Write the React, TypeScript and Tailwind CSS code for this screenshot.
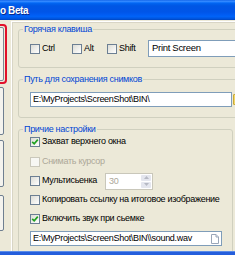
import React from 'react';

function Check({ checked = false, disabled = false }: { checked?: boolean; disabled?: boolean }) {
  return (
    <span
      className={
        disabled
          ? 'w-[10px] h-[10px] shrink-0 border border-[#CAC8BB] bg-[#F7F7F3]'
          : 'w-[10px] h-[10px] shrink-0 border border-[#6C7F93] bg-[linear-gradient(135deg,#DCDCD5,#FFFFFF)] flex items-center justify-center'
      }
    >
      {checked && (
        <svg width="8" height="8" viewBox="0 0 8 8">
          <path d="M1.2 3.8 L3.2 5.8 L6.8 1.6" fill="none" stroke="#21A121" strokeWidth="1.7" />
        </svg>
      )}
    </span>
  );
}

function Group({ title, className, children }: { title: string; className: string; children: React.ReactNode }) {
  return (
    <fieldset className={`border border-[#D0D0BF] rounded-[3px] pl-[11px] ${className}`}>
      <legend className="ml-[-7px] px-[1px] leading-[11px] text-[#0046D5]">{title}</legend>
      {children}
    </fieldset>
  );
}

export default function App() {
  return (
    <div className="w-[235px] h-[255px] overflow-hidden flex flex-col bg-[#ECE9D8] text-[9px] tracking-[-0.3px] text-black font-['Liberation_Sans',Arial,sans-serif]">
      {/* title bar */}
      <div className="h-[20px] shrink-0 flex items-center bg-[linear-gradient(to_bottom,#0A5FE8_0%,#3D8FFF_6%,#1A7BFF_10%,#0062EE_18%,#0056E4_30%,#0055E8_60%,#005BF2_72%,#0063F8_82%,#0057E2_92%,#0046C0_100%)]">
        <span className="ml-0 text-white font-bold text-[10px] tracking-[-0.4px] [text-shadow:1px_1px_0_#0A2A8A]">o Beta</span>
      </div>

      <div className="flex-1 min-h-0 flex overflow-hidden">
        {/* left buttons */}
        <div className="w-[11px] shrink-0 flex flex-col">
          <div className="mt-[4px] ml-[-7px] w-[14px] h-[60px] rounded-[4px] border-2 border-[#E2102A] p-px">
            <div className="h-full rounded-[2px] border border-[#7D8894] bg-[#F4F3EE]" />
          </div>
          <div className="mt-[3px] ml-[-7px] w-[11px] h-[48px] rounded-[2px] border border-[#6F7F90] bg-[#F4F3EE]" />
          <div className="mt-[5px] ml-[-7px] w-[11px] h-[47px] rounded-[2px] border border-[#6F7F90] bg-[#F4F3EE]" />
          <div className="mt-[8px] ml-[-7px] w-[11px] h-[36px] rounded-[2px] border border-[#6F7F90] bg-[#F4F3EE]" />
        </div>

        {/* panel */}
        <div className="w-[240px] shrink-0 mt-px border-l border-t border-[#FFFFFF] shadow-[inset_1px_1px_0_#D8D5C6] pl-[6px]">
          <Group title="Горячая клавиша" className="mt-[2px] pt-[5px] pb-[10px]">
            <div className="flex items-center h-[17px]">
              <label className="w-[42px] flex items-center gap-[2px]"><Check />Ctrl</label>
              <label className="w-[35px] flex items-center gap-[2px]"><Check />Alt</label>
              <label className="w-[41px] flex items-center gap-[2px]"><Check />Shift</label>
              <div className="flex-1 h-[17px] border border-[#7F9DB9] bg-white flex items-center pl-[3px] text-[9.5px]">Print Screen</div>
            </div>
          </Group>

          <Group title="Путь для сохранения снимков" className="mt-[6px] pt-[7px] pb-[10px]">
            <div className="flex items-center h-[15px]">
              <div className="w-[202px] h-[15px] border border-[#7F9DB9] bg-white flex items-center pl-[2px]">E:\MyProjects\ScreenShot\BIN\</div>
              <div className="ml-px w-[8px] h-[11px] bg-[#F2D86A] border border-[#C9A93A] rounded-[1px]" />
            </div>
          </Group>

          <Group title="Причие настройки" className="mt-[6px] w-[215px] pb-[20px]">
            <label className="h-[14px] flex items-center gap-[2px]"><Check checked />Захват верхнего окна</label>
            <label className="mt-[6px] h-[14px] flex items-center gap-[2px] text-[#ACA899]"><Check disabled />Снимать курсор</label>
            <div className="mt-[5px] h-[14px] flex items-center">
              <label className="w-[75px] flex items-center gap-[2px]"><Check />Мультисьенка</label>
              <div className="w-[48px] h-[17px] shrink-0 border border-[#C9C7BA] bg-white flex">
                <span className="flex-1 pl-[3px] leading-[15px] text-[#ACA899]">30</span>
                <div className="w-[12px] flex flex-col gap-px p-px">
                  <div className="flex-1 rounded-[1px] bg-[#E4E6EE] flex items-center justify-center">
                    <svg width="5" height="3" viewBox="0 0 5 3"><path d="M0 3 L2.5 0 L5 3Z" fill="#B6B9C4" /></svg>
                  </div>
                  <div className="flex-1 rounded-[1px] bg-[#E4E6EE] flex items-center justify-center">
                    <svg width="5" height="3" viewBox="0 0 5 3"><path d="M0 0 L2.5 3 L5 0Z" fill="#B6B9C4" /></svg>
                  </div>
                </div>
              </div>
            </div>
            <label className="mt-[5px] h-[14px] flex items-center gap-[2px] whitespace-nowrap"><Check />Копировать ссылку на итоговое изображение</label>
            <label className="mt-[5px] h-[14px] flex items-center gap-[2px]"><Check checked />Включить звук при сьемке</label>
            <div className="mt-[5px] w-[192px] h-[15px] border border-[#7F9DB9] bg-white flex items-center pl-[2px] pr-[2px]">
              <span className="flex-1 whitespace-nowrap overflow-hidden">E:\MyProjects\ScreenShot\BIN\\sound.wav</span>
              <svg width="8" height="10" viewBox="0 0 8 10">
                <path d="M0.5 0.5 H5 L7.5 3 V9.5 H0.5Z" fill="#FFFFFF" stroke="#9AA6B8" />
                <path d="M5 0.5 V3 H7.5" fill="#E4E8F0" stroke="#9AA6B8" />
              </svg>
            </div>
          </Group>
        </div>
      </div>

      {/* taskbar edge */}
      <div className="h-[4px] shrink-0 border-t border-[#5B8CE8] bg-[#245EDC]" />
    </div>
  );
}
